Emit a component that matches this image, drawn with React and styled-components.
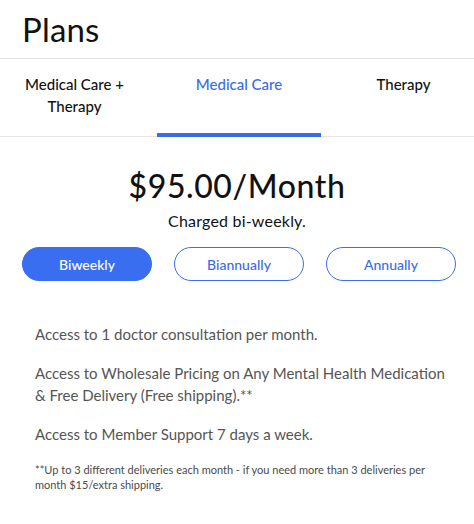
import React, { useState } from 'react'
import styled, { createGlobalStyle } from 'styled-components'

const GlobalStyle = createGlobalStyle`
  * { box-sizing: border-box; }
  body {
    margin: 0;
    background: #fff;
    font-family: Lato, "Noto Sans", sans-serif;
    color: #111;
  }
`

// shift nudges each label so it sits where the original design puts it
const tabs = [
  { label: 'Medical Care + Therapy', shift: -8 },
  { label: 'Medical Care', shift: 0 },
  { label: 'Therapy', shift: 12 },
]
const periods = ['Biweekly', 'Biannually', 'Annually']
const features = [
  'Access to 1 doctor consultation per month.',
  'Access to Wholesale Pricing on Any Mental Health Medication & Free Delivery (Free shipping).**',
  'Access to Member Support 7 days a week.',
]

function App() {
  const [tab, setTab] = useState(1)
  const [period, setPeriod] = useState(0)

  return (
    <Page>
      <GlobalStyle />
      <Header>
        <Title>Plans</Title>
      </Header>

      <TabBar>
        {tabs.map((t, i) => (
          <Tab
            key={t.label}
            active={i === tab}
            shift={t.shift}
            onClick={() => setTab(i)}
          >
            <TabLabel>{t.label}</TabLabel>
          </Tab>
        ))}
      </TabBar>

      <PriceBlock>
        <Price>$95.00/Month</Price>
        <Charged>Charged bi-weekly.</Charged>
      </PriceBlock>

      <PeriodRow>
        {periods.map((p, i) => (
          <PeriodButton
            key={p}
            selected={i === period}
            onClick={() => setPeriod(i)}
          >
            {p}
          </PeriodButton>
        ))}
      </PeriodRow>

      <Features>
        {features.map((f) => (
          <Feature key={f}>{f}</Feature>
        ))}
        <Footnote>
          **Up to 3 different deliveries each month - if you need more than 3
          deliveries per month $15/extra shipping.
        </Footnote>
      </Features>
    </Page>
  )
}

export default App

const Page = styled.div`
  width: 474px;
  min-height: 524px;
  background: #fff;
`

const Header = styled.div`
  height: 59px;
  padding-left: 22px;
  border-bottom: 1px solid #e6e6e6;
  display: flex;
  align-items: center;
`

const Title = styled.h1`
  margin: 0;
  font-size: 33px;
  font-weight: 400;
  letter-spacing: 0.2px;
  color: #111;
`

const TabBar = styled.div`
  display: grid;
  grid-template-columns: 157px 164px 153px;
  height: 78px;
  border-bottom: 1px solid #e6e6e6;
`

const Tab = styled.div`
  display: flex;
  justify-content: center;
  padding-top: 14px;
  padding-left: ${(p) => (p.shift > 0 ? p.shift : 0)}px;
  padding-right: ${(p) => (p.shift < 0 ? -p.shift : 0)}px;
  cursor: pointer;
  color: ${(p) => (p.active ? '#3a6be8' : '#111')};
  border-bottom: 4px solid ${(p) => (p.active ? '#3a6be8' : 'transparent')};
  margin-bottom: -1px;
`

const TabLabel = styled.span`
  font-size: 15px;
  font-weight: 500;
  line-height: 22px;
  text-align: center;
  max-width: 120px;
`

const PriceBlock = styled.div`
  display: flex;
  flex-direction: column;
  align-items: center;
  padding-top: 29px;
`

const Price = styled.div`
  font-size: 32px;
  font-weight: 500;
  line-height: 40px;
  letter-spacing: 0.6px;
  color: #111;
`

const Charged = styled.div`
  font-size: 16px;
  line-height: 20px;
  margin-top: 5px;
  letter-spacing: 0.2px;
  color: #111;
`

const PeriodRow = styled.div`
  display: grid;
  grid-template-columns: repeat(3, 130px);
  gap: 22px;
  padding: 0 22px;
  margin-top: 16px;
`

const PeriodButton = styled.button`
  height: 34px;
  border-radius: 17px;
  border: 1px solid #3a6ef0;
  background: ${(p) => (p.selected ? '#3a6ef0' : '#fff')};
  color: ${(p) => (p.selected ? '#fff' : '#3a6be8')};
  font-family: inherit;
  font-size: 14px;
  font-weight: 500;
  cursor: pointer;
`

const Features = styled.div`
  padding: 42px 22px 0 35px;
  display: flex;
  flex-direction: column;
  gap: 17px;
`

const Feature = styled.p`
  margin: 0;
  font-size: 15px;
  line-height: 22px;
  color: #555;
`

const Footnote = styled.p`
  margin: 0;
  font-size: 11px;
  line-height: 15px;
  color: #4a4a4a;
  padding-right: 10px;
`
